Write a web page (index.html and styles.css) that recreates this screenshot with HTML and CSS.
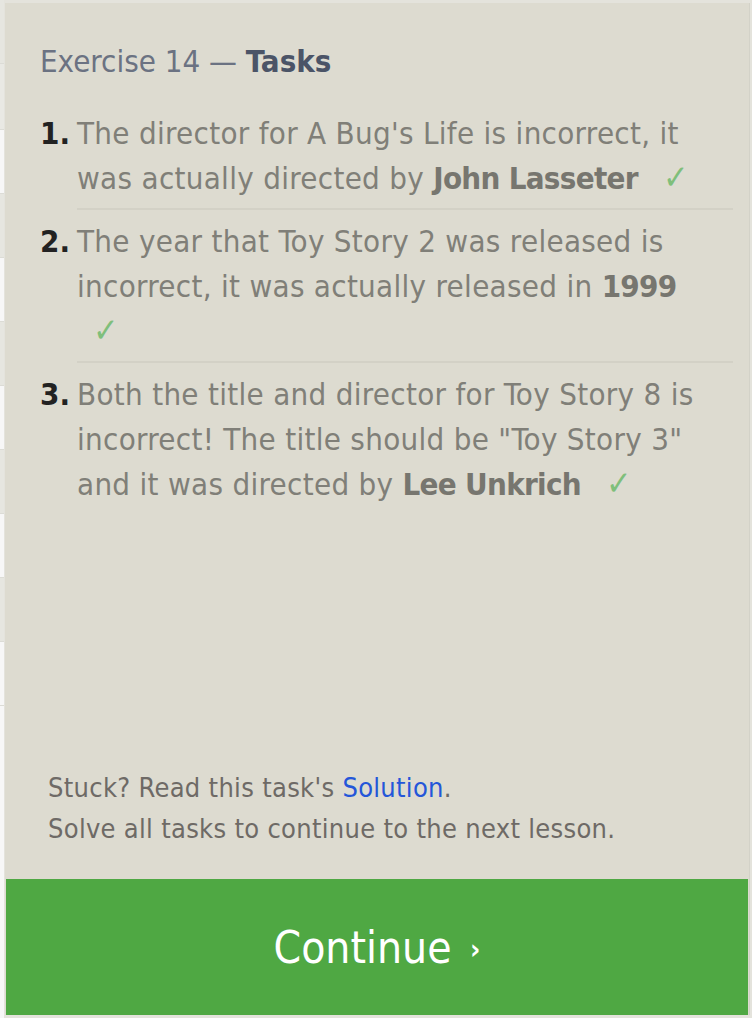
FILE: index.html
```html
<!DOCTYPE html>
<html lang="en">
<head>
<meta charset="utf-8">
<title>Exercise 14 — Tasks</title>
<link rel="stylesheet" href="styles.css">
</head>
<body>
<div class="page">
  <div class="stripe">
    <div class="row row-grey"></div>
    <div class="row row-light"></div>
    <div class="row row-white"></div>
    <div class="row row-grey"></div>
    <div class="row row-white"></div>
    <div class="row row-grey"></div>
    <div class="row row-white"></div>
    <div class="row row-grey"></div>
    <div class="row row-white"></div>
    <div class="row row-grey"></div>
    <div class="row row-white"></div>
    <div class="row row-white row-last"></div>
  </div>
  <section class="panel">
    <div class="content">
      <h1 class="title">Exercise 14 — <strong>Tasks</strong></h1>
      <ol class="tasks">
        <li class="task">
          <span class="num">1.</span>
          <div class="text">The director for A Bug's Life is incorrect, it was actually directed by <b>John Lasseter</b> <span class="check">✓</span></div>
        </li>
        <li class="task">
          <span class="num">2.</span>
          <div class="text">The year that Toy Story 2 was released is incorrect, it was actually released in <b>1999</b> <span class="check">✓</span></div>
        </li>
        <li class="task">
          <span class="num">3.</span>
          <div class="text text-last">Both the title and director for Toy Story 8 is incorrect! The title should be "Toy Story 3" and it was directed by <b>Lee Unkrich</b> <span class="check">✓</span></div>
        </li>
      </ol>
    </div>
    <div class="footer">
      <p class="note">Stuck? Read this task's <a class="link" href="#">Solution</a>.</p>
      <p class="note">Solve all tasks to continue to the next lesson.</p>
    </div>
    <button class="continue" type="button">Continue <span class="chev">›</span></button>
  </section>
</div>
</body>
</html>
```

FILE: styles.css
```css
html, body {
  margin: 0;
  padding: 0;
}
body {
  background: #e4e3dc;
  font-family: "DejaVu Sans Condensed", "DejaVu Sans", sans-serif;
  font-stretch: condensed;
  width: 752px;
  height: 1018px;
  overflow: hidden;
}
.page {
  display: flex;
  height: 1018px;
}
.stripe {
  width: 4px;
  display: flex;
  flex-direction: column;
  flex: none;
  margin-right: 1px;
}
.row {
  height: 63px;
  border-bottom: 1px solid #dcdcd6;
  flex: none;
}
.row-grey { background: #e6e6e0; }
.row-light { background: #e9e9e4; height: 65px; }
.row-white { background: #f7f7f7; }
.row-last { flex: 1; border-bottom: none; }
.panel {
  width: 744px;
  margin-top: 3px;
  height: 1012px;
  background: #dddbd0;
  display: flex;
  flex-direction: column;
  border-right: 1px solid #d3d2c8;
}
.content {
  flex: 1;
  padding: 36px 16px 0 35px;
}
.title {
  margin: 0 0 28px;
  font-size: 31px;
  line-height: 44px;
  font-weight: normal;
  color: #6b7282;
}
.title strong {
  color: #4b5467;
  font-weight: bold;
}
.tasks {
  list-style: none;
  margin: 0;
  padding: 0;
}
.task {
  display: flex;
  font-size: 31px;
  letter-spacing: 0.3px;
  line-height: 45px;
  margin-bottom: 9px;
}
.num {
  width: 37px;
  flex: none;
  color: #222;
  font-weight: bold;
  letter-spacing: 0;
}
.text {
  flex: 1;
  color: #807f78;
  padding-bottom: 7px;
  border-bottom: 2px solid #d3d1c6;
}
.text b {
  color: #77766f;
  letter-spacing: -0.7px;
}
.text-last {
  border-bottom: none;
}
.check {
  display: inline-block;
  color: #7fbf7b;
  margin: 0 10px 0 16px;
  font-size: 34px;
  line-height: 34px;
}
.footer {
  padding: 0 20px 30px 43px;
}
.note {
  margin: 0;
  font-size: 27px;
  letter-spacing: 0.3px;
  line-height: 41px;
  color: #6e6a66;
}
.link {
  color: #2456d9;
  text-decoration: none;
}
.continue {
  height: 136px;
  margin: 0 0 0 1px;
  width: 742px;
  border: none;
  background: #4fa843;
  color: #fff;
  font-family: inherit;
  font-stretch: condensed;
  font-size: 44px;
  padding: 0;
  cursor: pointer;
}
.chev {
  font-size: 28px;
  font-weight: bold;
  vertical-align: 4px;
  margin-left: 6px;
}
```
